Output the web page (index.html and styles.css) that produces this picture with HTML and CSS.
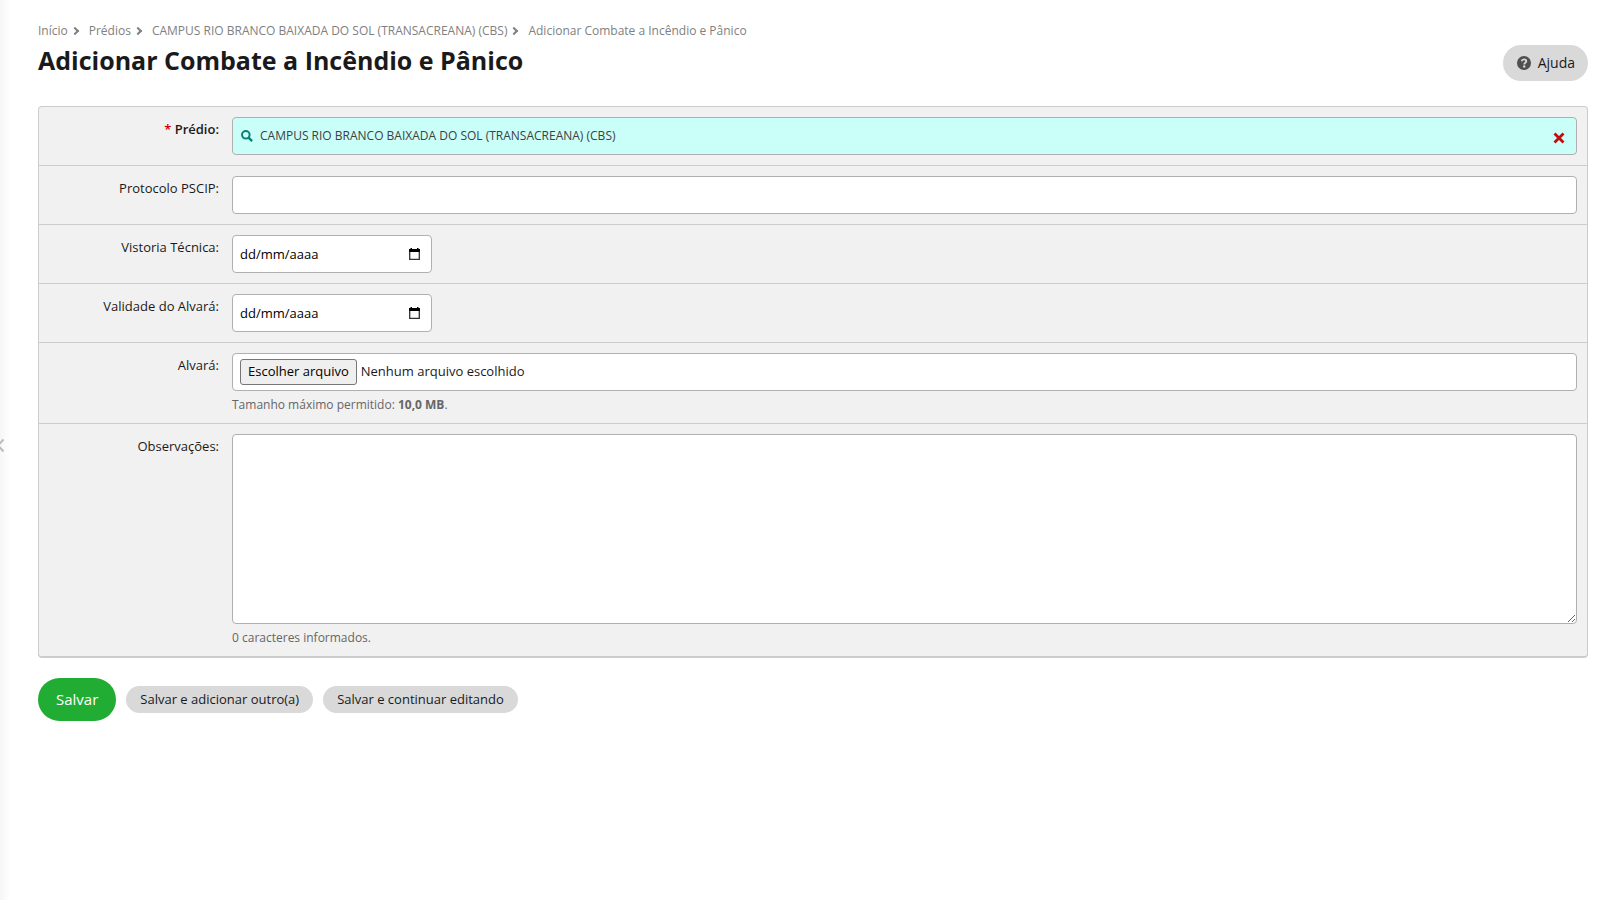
FILE: index.html
```
<!DOCTYPE html>
<html lang="pt-BR">
<head>
	<meta charset="utf-8">
	<title>Adicionar Combate a Incêndio e Pânico</title>
	<link rel="stylesheet" href="styles.css">
</head>
<body>
<button type="button" class="toggle-menu" aria-label="Mostrar menu">
	<svg width="10" height="14" viewBox="0 0 10 14"><path d="M8.500 1.500 3 7.500l5.500 6" fill="none" stroke="#bbb" stroke-width="2"/></svg>
</button>
<main id="content">
	<ul class="breadcrumbs">
		<li><a href="#">Início</a></li>
		<li><a href="#">Prédios</a></li>
		<li><a href="#">CAMPUS RIO BRANCO BAIXADA DO SOL (TRANSACREANA) (CBS)</a></li>
		<li>Adicionar Combate a Incêndio e Pânico</li>
	</ul>
	<div class="title-container">
		<h1>Adicionar Combate a Incêndio e Pânico</h1>
		<button type="button" class="btn help">
			<svg width="14" height="14" viewBox="0 0 14 14"><circle cx="7" cy="7" r="7" fill="#505050"/><path d="M4.600 5.300c.3-1.300 1.200-1.900 2.400-1.900 1.300 0 2.300.7 2.300 1.800 0 1.600-2.100 1.500-2.100 3.200" fill="none" stroke="#d9d9d9" stroke-width="1.800"/><circle cx="7.200" cy="10.500" r="1.200" fill="#d9d9d9"/></svg>
			Ajuda
		</button>
	</div>
	<form>
		<div class="module">
			<div class="form-row">
				<label class="required" for="id_predio">Prédio:</label>
				<div class="field">
					<div class="control autocomplete">
						<svg width="12" height="12" viewBox="0 0 12 12"><circle cx="4.800" cy="4.800" r="3.800" fill="none" stroke="#0c8072" stroke-width="2"/><path d="m7.600 7.600 3.500 3.500" stroke="#0c8072" stroke-width="2.400"/></svg>
						<input type="text" id="id_predio" value="CAMPUS RIO BRANCO BAIXADA DO SOL (TRANSACREANA) (CBS)">
						<button type="button" class="clear" aria-label="Limpar">
							<svg width="12" height="12" viewBox="0 0 12 12"><path d="m1.500 1.500 9 9m0-9-9 9" stroke="#c40a0a" stroke-width="2.800"/></svg>
						</button>
					</div>
				</div>
			</div>
			<div class="form-row">
				<label for="id_protocolo">Protocolo PSCIP:</label>
				<div class="field">
					<input type="text" class="control" id="id_protocolo">
				</div>
			</div>
			<div class="form-row">
				<label for="id_vistoria">Vistoria Técnica:</label>
				<div class="field">
					<div class="control date">
						<input type="text" id="id_vistoria" placeholder="dd/mm/aaaa">
						<svg width="11" height="12" viewBox="0 0 11 12"><path d="M.700 2h9.600v9.300H.700z" fill="none" stroke="#333" stroke-width="1.300"/><path d="M0 1h11v3H0zM1.500 0H3v2H1.500zM8 0h1.500v2H8z" fill="#000"/></svg>
					</div>
				</div>
			</div>
			<div class="form-row">
				<label for="id_validade">Validade do Alvará:</label>
				<div class="field">
					<div class="control date">
						<input type="text" id="id_validade" placeholder="dd/mm/aaaa">
						<svg width="11" height="12" viewBox="0 0 11 12"><path d="M.700 2h9.600v9.300H.700z" fill="none" stroke="#333" stroke-width="1.300"/><path d="M0 1h11v3H0zM1.500 0H3v2H1.500zM8 0h1.500v2H8z" fill="#000"/></svg>
					</div>
				</div>
			</div>
			<div class="form-row">
				<label for="id_alvara">Alvará:</label>
				<div class="field">
					<div class="control file">
						<input type="file" id="id_alvara" hidden>
						<button type="button" onclick="document.getElementById('id_alvara').click()">Escolher arquivo</button>
						<span>Nenhum arquivo escolhido</span>
					</div>
					<p class="help-text">Tamanho máximo permitido: <strong>10,0 MB</strong>.</p>
				</div>
			</div>
			<div class="form-row">
				<label for="id_observacoes">Observações:</label>
				<div class="field">
					<textarea class="control" id="id_observacoes"></textarea>
					<p class="help-text">0 caracteres informados.</p>
				</div>
			</div>
		</div>
		<div class="submit-row">
			<button type="submit" class="btn success">Salvar</button>
			<button type="submit" class="btn">Salvar e adicionar outro(a)</button>
			<button type="submit" class="btn">Salvar e continuar editando</button>
		</div>
	</form>
</main>
</body>
</html>
```
FILE: styles.css
```
*,*:before{box-sizing:border-box;}
body,h1,ul,p{margin:0;padding:0;}
body{min-height:100vh;font:13px/18px "Open Sans",sans-serif;color:#1a1a1a;background:#fff linear-gradient(to right,#f6f6f6,#fff) 0 0/10px 100% no-repeat;}
a{color:inherit;text-decoration:none;}
button,input,textarea{font:inherit;color:inherit;}
button{cursor:pointer;}
svg{flex:none;display:block;}

.toggle-menu{position:fixed;left:-5px;top:50%;width:10px;height:14px;margin-top:-12px;padding:0;border:0;background:none;}

#content{padding:22px 32px 40px 38px;}
.breadcrumbs{display:flex;list-style:none;font-size:12px;color:#808080;margin-bottom:5px;}
.breadcrumbs li{display:flex;align-items:center;}
.breadcrumbs li + li:before{content:"";width:6px;height:6px;margin:0 11px 0 4px;border:solid #808080;border-width:2px 2px 0 0;transform:rotate(45deg);}
.title-container{display:flex;justify-content:space-between;margin-bottom:25px;}
h1{font-size:25px;line-height:30px;font-weight:700;}

.btn{height:27px;padding:0 14px 2px;border:0;border-radius:22px;background:#d9d9d9;}
.btn.help{display:flex;align-items:center;gap:7px;height:36px;padding:0 13px 0 14px;font-size:14px;}
.btn.success{height:43px;padding:0 18px 2px;font-size:15px;background:#21ad34;color:#fff;}

.module{border:1px solid #ccc;border-bottom-width:2px;border-radius:4px;background:#f1f1f1;}
.form-row{display:flex;gap:13px;padding:10px;}
.form-row + .form-row{border-top:1px solid #ccc;}
.form-row > label{width:170px;padding-top:3px;text-align:right;}
.form-row > label.required{font-weight:600;}
.required:before{content:"* ";color:#d00000;}
.field{flex:1;}
.control{display:flex;align-items:center;width:100%;height:38px;padding:0 7px;border:1px solid #b0b0b0;border-radius:4px;background:#fff;}
.control > input{flex:1;min-width:0;padding:0;border:0;outline:0;background:none;}
textarea.control{display:block;height:190px;resize:vertical;}
.autocomplete{gap:7px;padding:0 11px 0 8px;background:#cafff9;}
.autocomplete > input{font-size:12px;color:#404040;}
.clear{padding:3px 0 0;border:0;background:none;}
.date{width:200px;padding-right:11px;}
.date > input::placeholder{color:#000;opacity:1;}
.file{gap:4px;}
.file > button{height:26px;padding:0 7px 2px;border:1px solid #767676;border-radius:3px;background:#efefef;color:#000;}
.file > span{padding-bottom:2px;}
.help-text{margin-top:6px;font-size:12px;line-height:16px;color:#666;}

.submit-row{display:flex;align-items:center;gap:10px;margin-top:20px;}
```
